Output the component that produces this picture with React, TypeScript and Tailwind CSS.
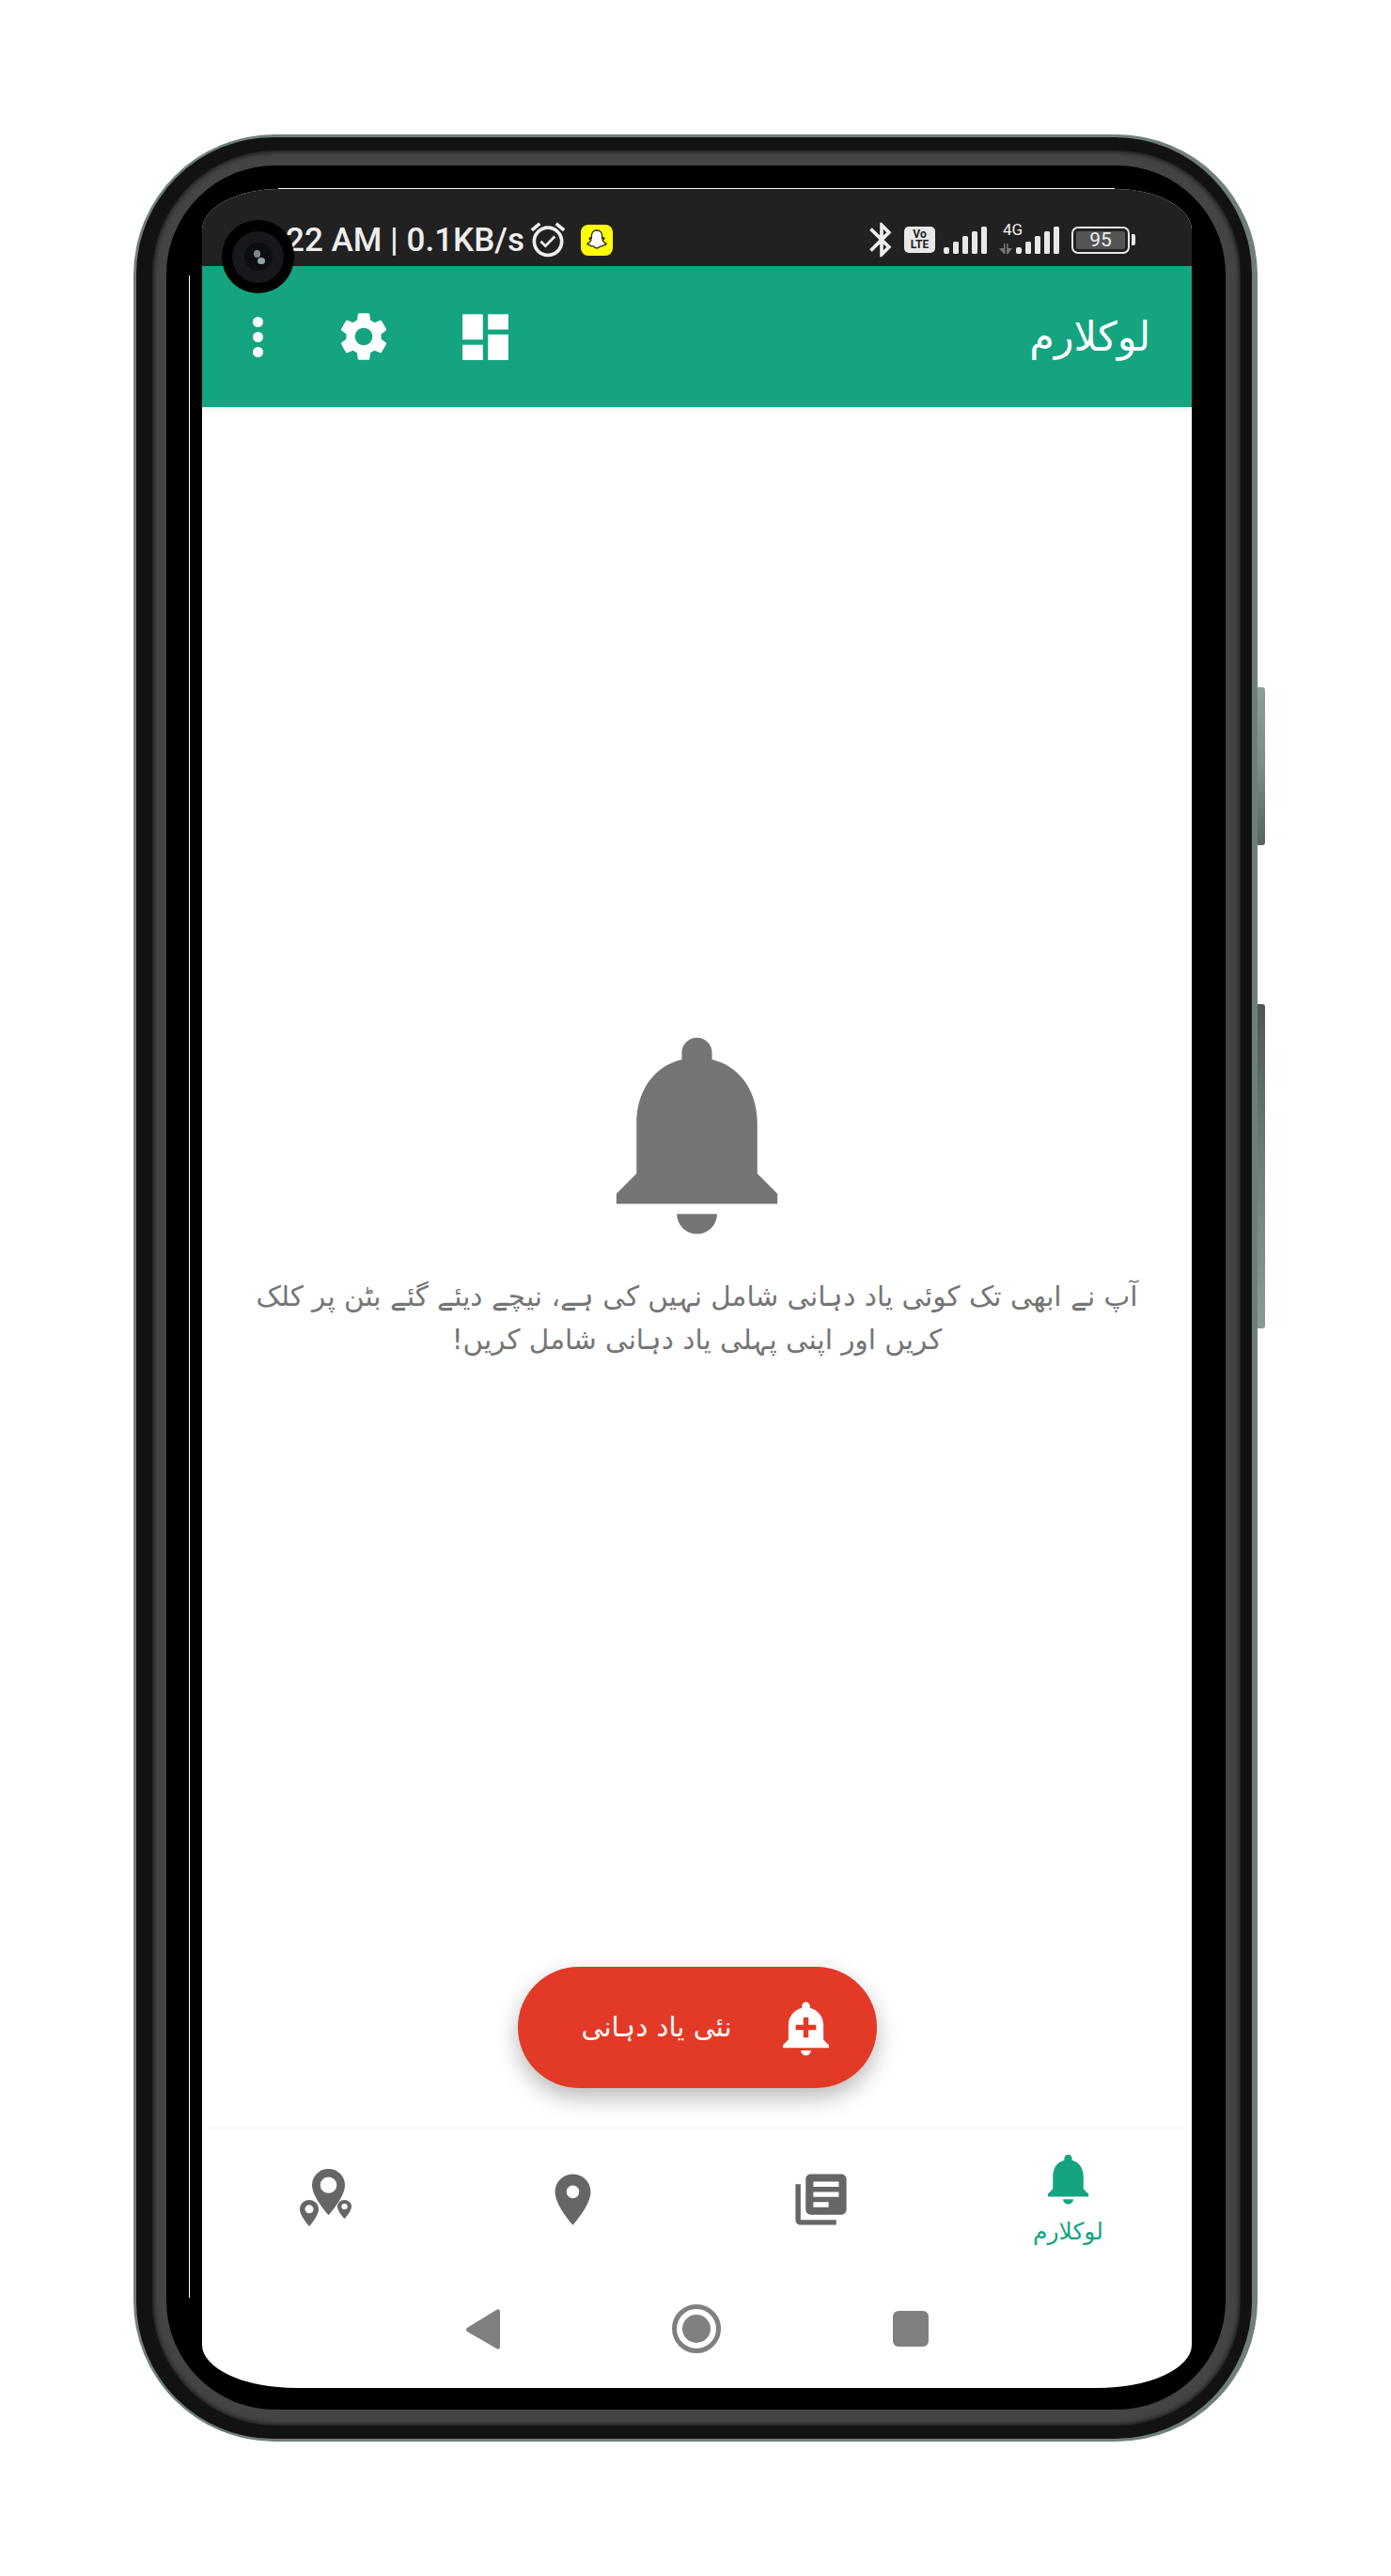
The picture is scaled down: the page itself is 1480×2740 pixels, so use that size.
import { MdAddAlert, MdAlarmOn, MdBluetooth, MdDashboard, MdLibraryBooks, MdNotifications, MdPlace, MdSettings } from "react-icons/md";

const urdu = "font-['DejaVu_Sans',sans-serif]";
const PIN = "M12 2C8.13 2 5 5.13 5 9c0 5.25 7 13 7 13s7-7.75 7-13c0-3.87-3.13-7-7-7z";

const Signal = () => (
  <svg width="46" height="29" viewBox="0 0 46 29" fill="#e8e8e8">
    <rect x="0" y="22" width="6" height="7" rx="2" />
    <rect x="10" y="16" width="6" height="13" rx="1.5" />
    <rect x="20" y="10" width="6" height="19" rx="1.5" />
    <rect x="30" y="5" width="6" height="24" rx="1.5" />
    <rect x="40" y="0" width="6" height="29" rx="1.5" />
  </svg>
);

const SnapGhost = () => (
  <div className="flex h-[33px] w-[34px] items-center justify-center rounded-[8px] bg-[#fffc00]">
    <svg width="24" height="24" viewBox="0 0 24 24">
      <path
        d="M12 2c3.6 0 5.6 2.6 5.6 5.8v2.6l2-.4c.7.6.3 1.4-1.6 2.1.6 2 2 3.4 4 4.1 0 1-1.4 1.4-3 1.7-.3 1.2-1.400 1-2.600 1-1.400 0-2.300 2.100-4.400 2.100s-3-2.100-4.400-2.100c-1.200 0-2.300.2-2.600-1-1.600-.3-3-.7-3-1.700 2-.7 3.400-2.100 4-4.100-1.900-.7-2.300-1.500-1.600-2.100l2 .4V7.800C6.400 4.600 8.400 2 12 2z"
        fill="#fff"
        stroke="#222"
        strokeWidth="1.3"
      />
    </svg>
  </div>
);

const MultiPin = () => (
  <svg width="55" height="61" viewBox="0 0 55 61" fill="#666">
    <svg x="13" y="0" width="35" height="49" viewBox="5 2 14 20" preserveAspectRatio="none">
      <path d={PIN} />
      <circle cx="12" cy="9" r="3.5" fill="#fff" />
    </svg>
    <svg x="0" y="33" width="20" height="28" viewBox="5 2 14 20" preserveAspectRatio="none">
      <path d={PIN} />
      <circle cx="12" cy="9" r="3.200" fill="#fff" />
    </svg>
    <svg x="40" y="33" width="15" height="20" viewBox="5 2 14 20" preserveAspectRatio="none">
      <path d={PIN} />
      <circle cx="12" cy="9" r="3" fill="#fff" />
    </svg>
  </svg>
);

const StatusBar = () => (
  <div className="flex h-[82px] shrink-0 items-center bg-[#212121] pt-[26px] pl-[60px] pr-[60px] text-[#eeeeee]">
    <span className="w-[286px] font-['Roboto',sans-serif] text-[35px] leading-none font-medium whitespace-nowrap">9:22 AM | 0.1KB/s</span>
    <MdAlarmOn size={44} />
    <div className="ml-[13px]">
      <SnapGhost />
    </div>
    <div className="ml-auto flex items-center">
      <MdBluetooth size={44} />
      <div className="ml-[2px] flex h-[28px] w-[33px] flex-col items-center justify-center rounded-[5px] bg-[#e8e8e8] font-['Roboto',sans-serif] text-[12px] leading-[11px] font-bold text-[#222]">
        <span>Vo</span>
        <span>LTE</span>
      </div>
      <div className="ml-[9px]">
        <Signal />
      </div>
      <div className="relative ml-[31px]">
        <Signal />
        <span className="absolute -top-[5px] -left-[14px] font-['Roboto',sans-serif] text-[17px] leading-none">4G</span>
        <svg className="absolute bottom-0 -left-[18px]" width="15" height="11" viewBox="0 0 15 11" fill="#777">
          <path d="M0 5h5V0h1.500v11H5zM8 0h1.500v5H14L9.500 11H8z" />
        </svg>
      </div>
      <div className="ml-[13px] flex h-[29px] w-[62px] items-center justify-center rounded-[7px] border-2 border-[#e8e8e8] p-[3px]">
        <div className="flex h-full w-full items-center justify-center rounded-[2px] bg-[#555] font-['Roboto',sans-serif] text-[21px] leading-none text-[#eee]">95</div>
      </div>
      <div className="ml-[2px] h-[12px] w-[4px] rounded-r-[2px] bg-[#e8e8e8]" />
    </div>
  </div>
);

const Header = () => (
  <header className="relative z-10 flex h-[150px] shrink-0 items-center bg-[#14a480] pr-[44px] pl-[54px] text-white shadow-[0_2px_6px_rgba(0,0,0,0.08)]">
    <div className="flex flex-col gap-[5px]">
      <span className="h-[11px] w-[11px] rounded-full bg-white" />
      <span className="h-[11px] w-[11px] rounded-full bg-white" />
      <span className="h-[11px] w-[11px] rounded-full bg-white" />
    </div>
    <MdSettings size={62} className="ml-[76px]" />
    <MdDashboard size={65} className="ml-[66px]" />
    <h1 className={`ml-auto ${urdu} text-[43px] leading-none`} dir="rtl">لوکلارم</h1>
  </header>
);

const BottomNav = () => (
  <nav className="grid h-[154px] shrink-0 grid-cols-4 justify-items-center border-t border-[#f4f4f4] text-[#666]">
    <div className="pt-[43px]">
      <MultiPin />
    </div>
    <div className="pt-[43px]">
      <MdPlace size={65} />
    </div>
    <div className="pt-[43px]">
      <MdLibraryBooks size={65} />
    </div>
    <div className="flex flex-col items-center pt-[21px] text-[#14a480]">
      <MdNotifications size={65} />
      <span className={`mt-[7px] ${urdu} text-[25px] leading-[34px]`} dir="rtl">لوکلارم</span>
    </div>
  </nav>
);

export default function App() {
  return (
    <div className="flex min-h-[2740px] items-center justify-center bg-white">
      <div className="relative h-[2454px] w-[1196px] rounded-[150px] bg-[#6f7f79] pt-[3px] pr-[6px] pb-[3px] pl-[3px]">
        {/* side keys */}
        <div className="absolute top-[588px] left-full h-[168px] w-[8px] rounded-r-[3px] bg-linear-to-b from-[#8f9c97] via-[#7d8c86] to-[#59655f]" />
        <div className="absolute top-[925px] left-full h-[345px] w-[8px] rounded-r-[3px] bg-linear-to-b from-[#4d5753] via-[#6f7e78] to-[#8c9a94]" />

        <div className="h-full rounded-[146px] bg-[#121212] pt-[14px] pr-[12px] pb-[14px] pl-[17px]">
          <div className="h-full rounded-[132px] bg-[#444444] pt-[16px] pr-[16px] pb-[17px] pl-[15px] shadow-[inset_0_0_6px_#000]">
            <div className="h-full rounded-[116px] bg-black pt-[25px] pr-[36px] pb-[23px] pl-[38px]">
              <div className="flex h-full flex-col overflow-hidden bg-white [border-radius:82px_82px_100px_100px/44px_44px_46px_46px]">
                <StatusBar />
                <Header />

                <main className="flex min-h-0 flex-1 flex-col items-center pt-[644px] pb-[42px]">
                  <MdNotifications size={257} className="shrink-0 text-[#757575]" />
                  <p className={`mt-[22px] w-[960px] text-center ${urdu} text-[29.5px] leading-[46px] text-[#757575]`} dir="rtl">
                    آپ نے ابھی تک کوئی یاد دہانی شامل نہیں کی ہے، نیچے دیئے گئے بٹن پر کلک کریں اور اپنی پہلی یاد دہانی شامل کریں!
                  </p>
                  <button className="mt-auto flex h-[129px] w-[382px] shrink-0 items-center rounded-full bg-[#e23a26] pr-[43px] pl-[66px] text-white shadow-[0_10px_24px_rgba(0,0,0,0.28)]">
                    <span className={`w-[164px] text-center whitespace-nowrap ${urdu} text-[29px] leading-none`} dir="rtl">نئی یاد دہانی</span>
                    <MdAddAlert size={65} className="ml-auto" />
                  </button>
                </main>

                <BottomNav />

                <div className="flex h-[123px] shrink-0 items-center justify-center gap-[183px] pb-[3px]">
                  <svg width="36" height="43" viewBox="0 0 36 43" fill="#808080">
                    <path d="M33 0.500C35 0 36 1 36 3v37c0 2-1 3-3 2.500L1 24c-1.300-1-1.300-3 0-4z" />
                  </svg>
                  <div className="flex h-[52px] w-[52px] items-center justify-center rounded-full border-[5px] border-[#808080]">
                    <div className="h-[30px] w-[30px] rounded-full bg-[#808080]" />
                  </div>
                  <div className="h-[38px] w-[38px] rounded-[6px] bg-[#808080]" />
                </div>
              </div>
            </div>
          </div>
        </div>

        {/* glass edge highlights */}
        <div className="absolute top-[57px] left-[154px] h-px w-[890px] bg-white" />
        <div className="absolute top-[150px] left-[59px] h-[2151px] w-px bg-white" />

        {/* punch-hole camera, has to sit above the app bar */}
        <div className="absolute top-[91px] left-[94px] z-20 flex h-[78px] w-[77px] items-center justify-center rounded-full bg-black">
          <div className="flex h-[55px] w-[55px] items-center justify-center rounded-full bg-[#16181c]">
            <div className="relative h-[30px] w-[30px] rounded-full bg-[#0b0d10]">
              <div className="absolute top-[8px] left-[10px] h-[8px] w-[7px] rounded-full bg-[#7c8790]" />
              <div className="absolute top-[16px] left-[14px] h-[7px] w-[8px] rounded-full bg-[#8fa1ac]" />
            </div>
          </div>
        </div>
      </div>
    </div>
  );
}
